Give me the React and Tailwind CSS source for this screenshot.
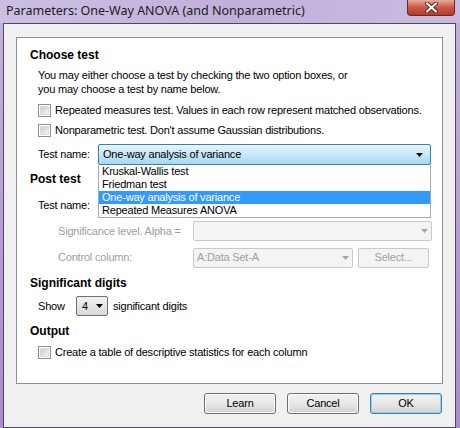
import React from "react";

const Check = ({ label }) => (
  <div className="flex items-center h-[14px] ml-[8px] gap-[4px]">
    <div className="w-[13px] h-[13px] border border-[#8e8f8f] bg-white p-[1px] shrink-0">
      <div className="w-full h-full bg-gradient-to-br from-[#c9ccd1] to-[#f4f4f4] border border-[#dcdcdc]" />
    </div>
    <span>{label}</span>
  </div>
);

const Arrow = ({ color = "#000" }) => (
  <svg width="7" height="4" viewBox="0 0 7 4">
    <path d="M0 0h7L3.5 4z" fill={color} />
  </svg>
);

const Heading = ({ children, className = "" }) => (
  <div className={`h-[14px] flex items-center font-bold text-[12px] tracking-normal ${className}`}>{children}</div>
);

const DisabledCombo = ({ width, text }) => (
  <div
    className={`${width} h-[20px] rounded-[2px] border border-[#c9c9c9] bg-[#f4f4f4] flex items-center px-[3px] text-[#a0a0a0]`}
  >
    <span className="flex-1">{text}</span>
    <Arrow color="#a5a5a5" />
  </div>
);

const WinButton = ({ children, primary }) => (
  <button
    className={`w-[72px] h-[21px] rounded-[3px] border ${
      primary ? "border-[#3c7fb1] shadow-[inset_0_0_0_1px_#8fd2f5]" : "border-[#707070] shadow-[inset_0_0_0_1px_#fcfcfc]"
    } bg-gradient-to-b from-[#f2f2f2] via-[#e8e8e8] to-[#d2d2d2] text-[11px] text-black flex items-center justify-center`}
  >
    {children}
  </button>
);

export default function App() {
  return (
    <div className="w-[460px] h-[428px] overflow-hidden bg-gradient-to-b from-[#c4b2dc] to-[#a98ccb] font-['Liberation_Sans',Arial,sans-serif] text-[11px] text-black flex flex-col">
      {/* Title bar */}
      <div className="h-[23px] flex items-start justify-between bg-gradient-to-r from-[#cdbfe3] via-[#c2b0db] to-[#c9bbe0] shrink-0">
        <div className="pl-[6px] pt-[2px] text-[12.5px] text-[#1b1b1b] font-['Noto_Sans',Arial,sans-serif] leading-[17px]">
          Parameters: One-Way ANOVA (and Nonparametric)
        </div>
        <div className="mr-[5px] w-[48px] h-[16px] rounded-b-[4px] border border-t-0 border-[#6a2a23] bg-gradient-to-b from-[#e9a99c] via-[#c9574a] to-[#b8382a] flex items-center justify-center">
          <svg width="13" height="11" viewBox="0 0 13 11">
            <path d="M2 1.5l9 8M11 1.5l-9 8" stroke="#4a2520" strokeWidth="4" strokeLinecap="round" />
            <path d="M2 1.5l9 8M11 1.5l-9 8" stroke="#fff" strokeWidth="2.2" strokeLinecap="round" />
          </svg>
        </div>
      </div>

      {/* Body */}
      <div className="ml-[3px] mr-[4px] flex-1 border border-[#4d4760] bg-[#f0f0f0] flex flex-col tracking-[-0.2px]">
        <div className="mt-[13px] ml-[12px] w-[427px] h-[347px] border border-[#8e8f8f] bg-white pl-[13px] pt-[10px] flex flex-col">
          <Heading>Choose test</Heading>
          <div className="mt-[6px] ml-[8px] leading-[14px]">
            You may either choose a test by checking the two option boxes, or
            <br />
            you may choose a test by name below.
          </div>
          <div className="mt-[7px]">
            <Check label="Repeated measures test. Values in each row represent matched observations." />
          </div>
          <div className="mt-[6px]">
            <Check label="Nonparametric test. Don't assume Gaussian distributions." />
          </div>

          <div className="mt-[7px] ml-[8px] flex items-center h-[21px]">
            <span className="w-[60px]">Test name:</span>
            <div className="relative w-[333px] h-[21px]">
              <div className="w-full h-full rounded-[2px] border border-[#3c7fb1] bg-gradient-to-b from-[#eaf6fd] via-[#c6e7f9] to-[#a6d8f4] flex items-center pl-[4px] pr-[7px]">
                <span className="flex-1">One-way analysis of variance</span>
                <Arrow />
              </div>
              <div className="absolute left-0 top-full w-full bg-white border border-t-0 border-[#a5acb5] z-10 flex flex-col leading-[13px]">
                <div className="h-[13px] pl-[3px]">Kruskal-Wallis test</div>
                <div className="h-[13px] pl-[3px]">Friedman test</div>
                <div className="h-[13px] pl-[3px] bg-[#3399ff] text-white">One-way analysis of variance</div>
                <div className="h-[13px] pl-[3px]">Repeated Measures ANOVA</div>
              </div>
            </div>
          </div>

          <Heading className="mt-[7px]">Post test</Heading>
          <div className="mt-[9px] ml-[8px] flex items-center h-[21px]">
            <span className="w-[60px]">Test name:</span>
            <div className="w-[333px] h-[21px] rounded-[2px] border border-[#707070] bg-[#f0f0f0]" />
          </div>

          <div className="mt-[5px] ml-[28px] flex items-center h-[20px] text-[#a0a0a0]">
            <span className="w-[135px]">Significance level. Alpha =</span>
            <DisabledCombo width="w-[239px]" text="" />
          </div>

          <div className="mt-[6px] ml-[28px] flex items-center h-[21px] text-[#a0a0a0]">
            <span className="w-[135px]">Control column:</span>
            <DisabledCombo width="w-[160px]" text="A:Data Set-A" />
            <div className="ml-[5px] w-[71px] h-[20px] rounded-[2px] border border-[#c9c9c9] bg-[#f4f4f4] flex items-center justify-center">
              Select...
            </div>
          </div>

          <Heading className="mt-[8px]">Significant digits</Heading>
          <div className="mt-[6px] ml-[8px] flex items-center h-[20px]">
            <span className="w-[38px]">Show</span>
            <div className="w-[32px] h-[20px] rounded-[2px] border border-[#707070] bg-gradient-to-b from-[#f2f2f2] to-[#d9d9d9] flex items-center pl-[5px] pr-[4px]">
              <span className="flex-1">4</span>
              <Arrow />
            </div>
            <span className="ml-[5px]">significant digits</span>
          </div>

          <Heading className="mt-[8px]">Output</Heading>
          <div className="mt-[7px]">
            <Check label="Create a table of descriptive statistics for each column" />
          </div>
        </div>

        <div className="mt-[9px] ml-[200px] flex gap-[11px]">
          <WinButton>Learn</WinButton>
          <WinButton>Cancel</WinButton>
          <WinButton primary>OK</WinButton>
        </div>
      </div>
    </div>
  );
}
